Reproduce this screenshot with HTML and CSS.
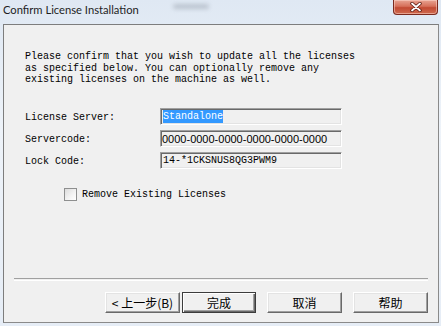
FILE: index.html
```html
<!DOCTYPE html>
<html lang="en">
<head>
    <meta charset="UTF-8">
    <title>Confirm License Installation</title>
    <link rel="stylesheet" href="styles.css">
</head>
<body>
    <div class="frame">
        <div class="titlebar">
            <span class="title">Confirm License Installation</span>
            <span class="smudge"></span>
            <button class="close" type="button">
                <svg width="14" height="10" viewBox="0 0 14 10">
                    <path d="M3 1.5 L11 8.5 M11 1.5 L3 8.5" stroke="#5a1a10" stroke-width="3.4" stroke-linecap="round"/>
                    <path d="M3 1.5 L11 8.5 M11 1.5 L3 8.5" stroke="#ffffff" stroke-width="1.8" stroke-linecap="round"/>
                </svg>
            </button>
        </div>

        <div class="client">
            <div class="page">
                <p class="intro">Please confirm that you wish to update all the licenses<br>as specified below. You can optionally remove any<br>existing licenses on the machine as well.</p>

                <div class="fields">
                    <div class="field">
                        <label class="field-label">License Server:</label>
                        <div class="box mono"><span class="sel">Standalone</span></div>
                    </div>
                    <div class="field">
                        <label class="field-label">Servercode:</label>
                        <div class="box sans">0000-0000-0000-0000-0000-0000</div>
                    </div>
                    <div class="field">
                        <label class="field-label">Lock Code:</label>
                        <div class="box mono">14-*1CKSNUS8QG3PWM9</div>
                    </div>
                </div>

                <label class="check">
                    <span class="checkbox"></span>
                    <span>Remove Existing Licenses</span>
                </label>
            </div>

            <div class="separator"></div>

            <div class="buttons">
                <div class="pair">
                    <button class="btn" type="button">&lt; 上一步(B)</button>
                    <button class="btn btn-default" type="button">完成</button>
                </div>
                <button class="btn" type="button">取消</button>
                <button class="btn" type="button">帮助</button>
            </div>
        </div>
    </div>
</body>
</html>
```

FILE: styles.css
```css
html, body {
    margin: 0;
    padding: 0;
}
body {
    width: 441px;
    height: 326px;
    overflow: hidden;
    background: #e4ecf5;
}
.frame {
    width: 441px;
    height: 326px;
    box-sizing: border-box;
    padding: 0 2px 3px 3px;
    display: flex;
    flex-direction: column;
    background: linear-gradient(180deg, #dfe8f3 0%, #eef3f9 40%, #e6edf6 100%);
}

/* title bar */
.titlebar {
    height: 24px;
    display: flex;
    align-items: flex-start;
    position: relative;
}
.title {
    font-family: Lato, "Noto Sans", sans-serif;
    font-size: 11.2px;
    color: #1e1e1e;
    line-height: 20px;
}
.smudge {
    position: absolute;
    left: 170px;
    top: 4px;
    width: 36px;
    height: 5px;
    border-radius: 3px;
    background: rgba(120, 130, 140, 0.35);
    filter: blur(2px);
}
.close {
    margin-left: auto;
    margin-right: 1px;
    width: 45px;
    height: 15px;
    padding: 0;
    border: 1px solid #7b2a1e;
    border-top: none;
    border-radius: 0 0 4px 4px;
    background: linear-gradient(180deg, #e8a493 0%, #d6705a 45%, #c24a33 55%, #cf6b4f 100%);
    box-shadow: inset 0 0 0 1px rgba(255, 220, 210, 0.5);
    display: flex;
    align-items: center;
    justify-content: center;
}

/* client area */
.client {
    flex: 1;
    border: 1px solid #7d7d7d;
    border-right-color: #8a8a8a;
    border-bottom-color: #8a8a8a;
    background: #f0f0f0;
    display: flex;
    flex-direction: column;
    font-family: "Liberation Mono", "Noto Sans CJK SC", monospace;
    font-size: 10px;
    color: #000;
}
.page {
    padding: 26px 21px 0 21px;
}
.intro {
    margin: 0;
    line-height: 11.5px;
    white-space: nowrap;
}
.fields {
    margin-top: 22px;
    display: flex;
    flex-direction: column;
    gap: 5px;
}
.field {
    display: flex;
    align-items: center;
    height: 17px;
}
.field-label {
    width: 135px;
    padding-top: 2px;
}
.box {
    width: 182px;
    height: 17px;
    box-sizing: border-box;
    border: 1px solid;
    border-color: #a0a0a0 #ffffff #ffffff #a0a0a0;
    box-shadow: inset 1px 1px 0 #696969, inset -1px -1px 0 #e3e3e3;
    background: #f0f0f0;
    padding: 1px 0 0 2px;
    display: flex;
    align-items: center;
    white-space: nowrap;
    overflow: hidden;
}
.box.sans {
    font-family: "Liberation Sans", Arial, sans-serif;
    font-size: 11px;
    padding-left: 1px;
}
.sel {
    background: #3399ff;
    color: #fff;
    line-height: 13px;
}
.check {
    margin: 19px 0 0 39px;
    display: flex;
    align-items: center;
    gap: 5px;
    height: 13px;
}
.checkbox {
    width: 13px;
    height: 13px;
    box-sizing: border-box;
    border: 1px solid #8e8f8f;
    background: linear-gradient(135deg, #dcdcdc 0%, #f4f4f4 60%, #ffffff 100%);
}

/* bottom bar */
.separator {
    margin: auto 10px 0 10px;
    height: 1px;
    border-top: 1px solid #a0a0a0;
    border-bottom: 1px solid #ffffff;
}
.buttons {
    margin: 11px 10px 9px 0;
    display: flex;
    justify-content: flex-end;
    gap: 11px;
}
.pair {
    display: flex;
    gap: 2px;
}
.btn {
    width: 75px;
    height: 21px;
    padding: 0;
    box-sizing: border-box;
    border: 1px solid;
    border-color: #ffffff #696969 #696969 #ffffff;
    box-shadow: inset -1px -1px 0 #a0a0a0, inset 1px 1px 0 #e3e3e3;
    background: #f0f0f0;
    font-family: "Noto Sans CJK SC", sans-serif;
    font-size: 12px;
    color: #000;
    line-height: 17px;
}
.btn-default {
    width: 74px;
    border-color: #3c3c3c;
    box-shadow: inset 1px 1px 0 #ffffff, inset -1px -1px 0 #696969, inset -2px -2px 0 #a0a0a0;
}
```
